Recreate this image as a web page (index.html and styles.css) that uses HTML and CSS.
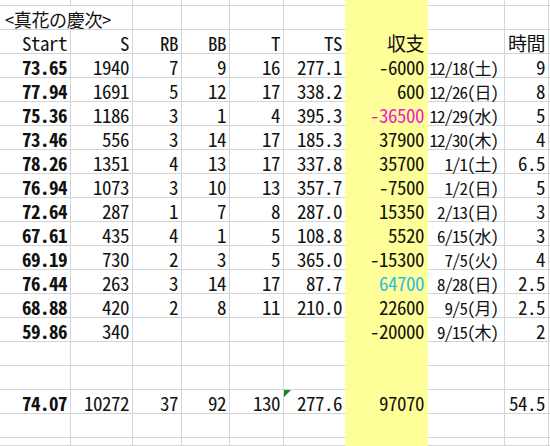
FILE: index.html
```html
<!DOCTYPE html>
<html lang="ja">
<head>
<meta charset="utf-8">
<title>真花の慶次</title>
<link rel="stylesheet" href="styles.css">
</head>
<body>
<div class="sheet">
  <div class="row top">
    <div class="c"></div><div class="c"></div><div class="c"></div><div class="c"></div><div class="c"></div><div class="c ts"></div><div class="c y"></div><div class="c"></div><div class="c"></div><div class="c"></div>
  </div>
  <div class="row">
    <div class="c title">&lt;真花の慶次&gt;</div><div class="c"></div><div class="c"></div><div class="c"></div><div class="c ts"></div><div class="c y"></div><div class="c"></div><div class="c"></div><div class="c"></div>
  </div>
  <div class="row">
    <div class="c">Start</div><div class="c">S</div><div class="c">RB</div><div class="c">BB</div><div class="c">T</div><div class="c ts">TS</div><div class="c y">収支</div><div class="c"></div><div class="c">時間</div><div class="c"></div>
  </div>
  <div class="row">
    <div class="c b">73.65</div><div class="c">1940</div><div class="c">7</div><div class="c">9</div><div class="c">16</div><div class="c ts">277.1</div><div class="c y">-6000</div><div class="c d">12/18(土)</div><div class="c">9</div><div class="c"></div>
  </div>
  <div class="row">
    <div class="c b">77.94</div><div class="c">1691</div><div class="c">5</div><div class="c">12</div><div class="c">17</div><div class="c ts">338.2</div><div class="c y">600</div><div class="c d">12/26(日)</div><div class="c">8</div><div class="c"></div>
  </div>
  <div class="row">
    <div class="c b">75.36</div><div class="c">1186</div><div class="c">3</div><div class="c">1</div><div class="c">4</div><div class="c ts">395.3</div><div class="c y neg">-36500</div><div class="c d">12/29(水)</div><div class="c">5</div><div class="c"></div>
  </div>
  <div class="row">
    <div class="c b">73.46</div><div class="c">556</div><div class="c">3</div><div class="c">14</div><div class="c">17</div><div class="c ts">185.3</div><div class="c y">37900</div><div class="c d">12/30(木)</div><div class="c">4</div><div class="c"></div>
  </div>
  <div class="row">
    <div class="c b">78.26</div><div class="c">1351</div><div class="c">4</div><div class="c">13</div><div class="c">17</div><div class="c ts">337.8</div><div class="c y">35700</div><div class="c d">1/1(土)</div><div class="c">6.5</div><div class="c"></div>
  </div>
  <div class="row">
    <div class="c b">76.94</div><div class="c">1073</div><div class="c">3</div><div class="c">10</div><div class="c">13</div><div class="c ts">357.7</div><div class="c y">-7500</div><div class="c d">1/2(日)</div><div class="c">5</div><div class="c"></div>
  </div>
  <div class="row">
    <div class="c b">72.64</div><div class="c">287</div><div class="c">1</div><div class="c">7</div><div class="c">8</div><div class="c ts">287.0</div><div class="c y">15350</div><div class="c d">2/13(日)</div><div class="c">3</div><div class="c"></div>
  </div>
  <div class="row">
    <div class="c b">67.61</div><div class="c">435</div><div class="c">4</div><div class="c">1</div><div class="c">5</div><div class="c ts">108.8</div><div class="c y">5520</div><div class="c d">6/15(水)</div><div class="c">3</div><div class="c"></div>
  </div>
  <div class="row">
    <div class="c b">69.19</div><div class="c">730</div><div class="c">2</div><div class="c">3</div><div class="c">5</div><div class="c ts">365.0</div><div class="c y">-15300</div><div class="c d">7/5(火)</div><div class="c">4</div><div class="c"></div>
  </div>
  <div class="row">
    <div class="c b">76.44</div><div class="c">263</div><div class="c">3</div><div class="c">14</div><div class="c">17</div><div class="c ts">87.7</div><div class="c y pos">64700</div><div class="c d">8/28(日)</div><div class="c">2.5</div><div class="c"></div>
  </div>
  <div class="row">
    <div class="c b">68.88</div><div class="c">420</div><div class="c">2</div><div class="c">8</div><div class="c">11</div><div class="c ts">210.0</div><div class="c y">22600</div><div class="c d">9/5(月)</div><div class="c">2.5</div><div class="c"></div>
  </div>
  <div class="row">
    <div class="c b">59.86</div><div class="c">340</div><div class="c"></div><div class="c"></div><div class="c"></div><div class="c ts"></div><div class="c y">-20000</div><div class="c d">9/15(木)</div><div class="c">2</div><div class="c"></div>
  </div>
  <div class="row">
    <div class="c"></div><div class="c"></div><div class="c"></div><div class="c"></div><div class="c"></div><div class="c ts"></div><div class="c y"></div><div class="c"></div><div class="c"></div><div class="c"></div>
  </div>
  <div class="row">
    <div class="c"></div><div class="c"></div><div class="c"></div><div class="c"></div><div class="c"></div><div class="c ts"></div><div class="c y"></div><div class="c"></div><div class="c"></div><div class="c"></div>
  </div>
  <div class="row">
    <div class="c b">74.07</div><div class="c">10272</div><div class="c">37</div><div class="c">92</div><div class="c">130</div><div class="c ts flag">277.6</div><div class="c y">97070</div><div class="c"></div><div class="c">54.5</div><div class="c"></div>
  </div>
  <div class="row">
    <div class="c"></div><div class="c"></div><div class="c"></div><div class="c"></div><div class="c"></div><div class="c ts"></div><div class="c y"></div><div class="c"></div><div class="c"></div><div class="c"></div>
  </div>
  <div class="row">
    <div class="c"></div><div class="c"></div><div class="c"></div><div class="c"></div><div class="c"></div><div class="c ts"></div><div class="c y"></div><div class="c"></div><div class="c"></div><div class="c"></div>
  </div>
</div>
</body>
</html>
```

FILE: styles.css
```css
html, body {
  margin: 0;
  padding: 0;
  background: #ffffff;
}

body {
  width: 550px;
  height: 446px;
  overflow: hidden;
}

.sheet {
  display: grid;
  grid-template-columns: 71px 62px 49px 48px 54px 62px 82px 77px 44px 1fr;
  grid-template-rows: 6px repeat(18, 24px) 8px;
  width: 550px;
  height: 446px;
  overflow: hidden;
  font-family: "Noto Sans CJK JP", sans-serif;
  font-feature-settings: "hwid" 1;
  font-size: 19px;
  letter-spacing: -0.5px;
  color: #111111;
}

.row {
  display: contents;
}

.c {
  box-sizing: border-box;
  border-right: 1px solid #d4d4d4;
  border-bottom: 1px solid #d4d4d4;
  padding: 3px 3px 0 0;
  line-height: 20px;
  text-align: right;
  white-space: nowrap;
  position: relative;
}

.top .c {
  padding: 0;
}

.title {
  grid-column: span 2;
  text-align: left;
  padding-left: 5px;
  font-size: 18px;
  letter-spacing: -0.3px;
}

.b {
  font-weight: 700;
}

.ts {
  border-right-color: #ffff99;
}

.y {
  background: #ffff99;
  border-right-color: #ffff99;
  border-bottom-color: #ffff99;
}

.neg {
  color: #f018d0;
}

.pos {
  color: #2fbde0;
}

.d {
  font-size: 17px;
  letter-spacing: -1px;
  padding-top: 4px;
  padding-right: 6px;
}

.flag::before {
  content: "";
  position: absolute;
  top: 0;
  left: 0;
  width: 0;
  height: 0;
  border-top: 7px solid #138a13;
  border-right: 7px solid transparent;
}
```
